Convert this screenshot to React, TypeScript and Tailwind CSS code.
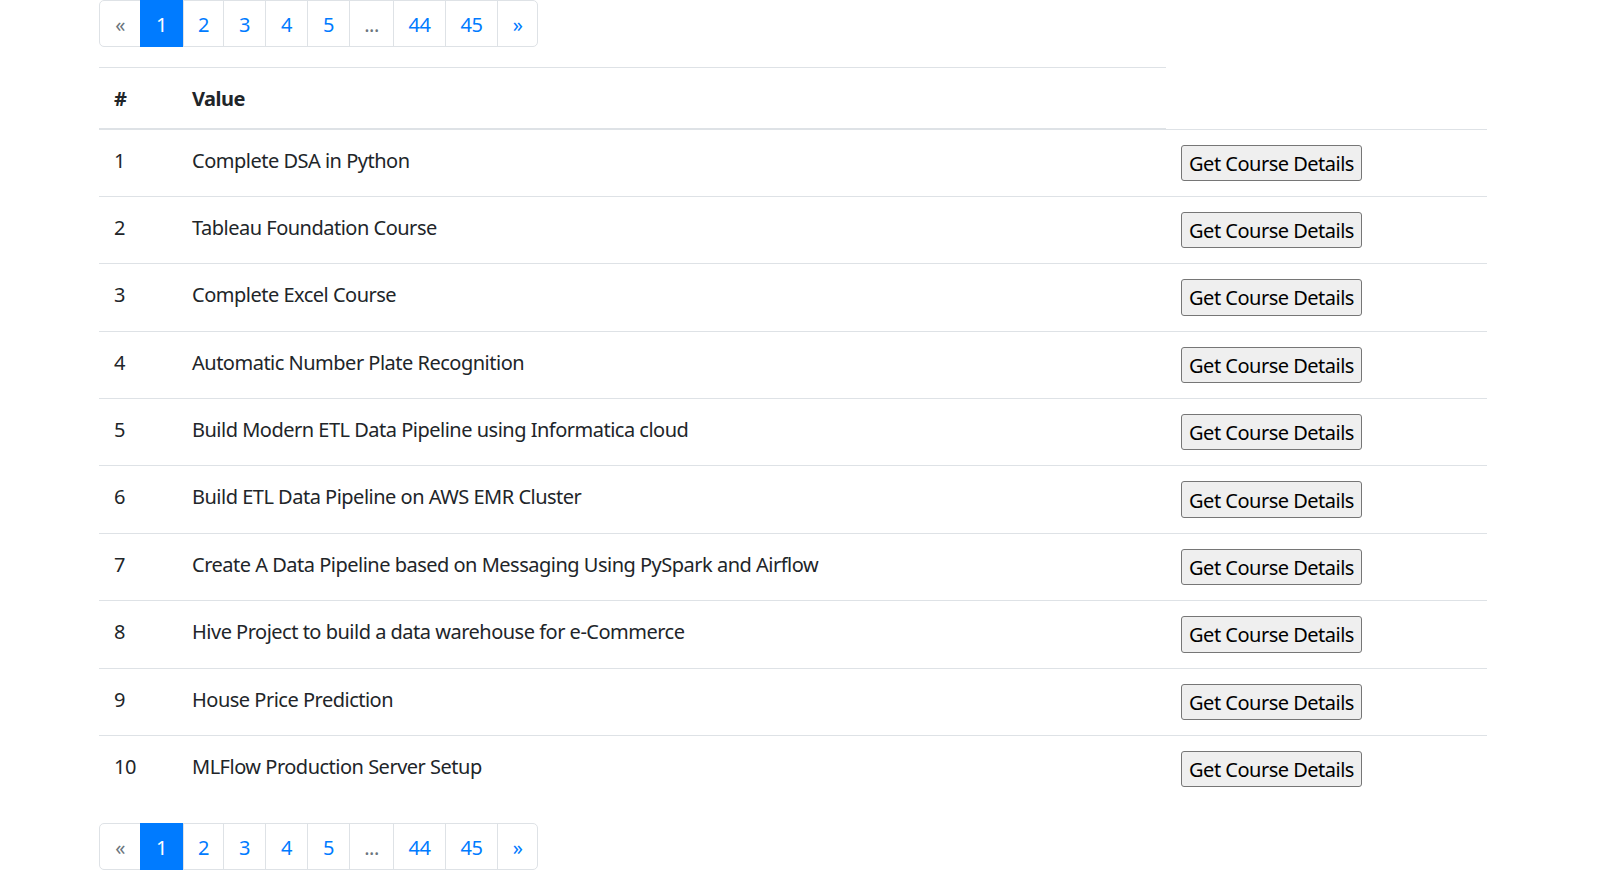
const courses = [
  "Complete DSA in Python",
  "Tableau Foundation Course",
  "Complete Excel Course",
  "Automatic Number Plate Recognition",
  "Build Modern ETL Data Pipeline using Informatica cloud",
  "Build ETL Data Pipeline on AWS EMR Cluster",
  "Create A Data Pipeline based on Messaging Using PySpark and Airflow",
  "Hive Project to build a data warehouse for e-Commerce",
  "House Price Prediction",
  "MLFlow Production Server Setup",
];

const Pager = () => (
  <nav>
    <ul className="flex h-[47px] w-fit rounded-[5px] border border-[#dee2e6] text-[20px] leading-[24px]">
      <li className="flex w-[40px] items-center justify-center pt-[2px] text-[#6c757d]">«</li>
      <li className="-my-px flex w-[43px] items-center justify-center bg-[#007bff] pt-[2px] text-white">1</li>
      <li className="flex w-[40px] items-center justify-center border-l border-[#dee2e6] pt-[2px] text-[#007bff]">2</li>
      <li className="flex w-[42px] items-center justify-center border-l border-[#dee2e6] pt-[2px] text-[#007bff]">3</li>
      <li className="flex w-[42px] items-center justify-center border-l border-[#dee2e6] pt-[2px] text-[#007bff]">4</li>
      <li className="flex w-[42px] items-center justify-center border-l border-[#dee2e6] pt-[2px] text-[#007bff]">5</li>
      <li className="flex w-[44px] items-center justify-center border-l border-[#dee2e6] pt-[2px] text-[#6c757d]">...</li>
      <li className="flex w-[52px] items-center justify-center border-l border-[#dee2e6] pt-[2px] text-[#007bff]">44</li>
      <li className="flex w-[52px] items-center justify-center border-l border-[#dee2e6] pt-[2px] text-[#007bff]">45</li>
      <li className="flex w-[40px] items-center justify-center border-l border-[#dee2e6] pt-[2px] text-[#007bff]">»</li>
    </ul>
  </nav>
);

export default function App() {
  return (
    <div
      className="min-h-screen bg-white pl-[99px] text-[20px] leading-[30px] tracking-[-0.5px] text-[#212529]"
      style={{ fontFamily: '"Segoe UI", "Noto Sans", sans-serif' }}
    >
      <Pager />
      <table className="mt-[20px] mb-[21px] w-[1388px] table-fixed border-collapse">
        <colgroup>
          <col className="w-[78px]" />
          <col className="w-[989px]" />
          <col className="w-[321px]" />
        </colgroup>
        <thead>
          <tr>
            <th className="border-t border-b-2 border-[#dee2e6] px-[15px] pt-[16px] pb-[14px] text-left font-bold">#</th>
            <th className="border-t border-b-2 border-[#dee2e6] px-[15px] pt-[16px] pb-[14px] text-left font-bold">Value</th>
          </tr>
        </thead>
        <tbody>
          {courses.map((c, i) => (
            <tr key={c}>
              <td className="border-t border-[#dee2e6] px-[15px] pt-[16px] pb-[14px] align-top">{i + 1}</td>
              <td className="border-t border-[#dee2e6] px-[15px] pt-[16px] pb-[14px] align-top">{c}</td>
              <td className="border-t border-[#dee2e6] p-[15px] align-top">
                <button className="h-[36.4px] w-[181px] rounded-[3px] border border-[#767676] bg-[#efefef] pt-[2px] text-center text-black">
                  Get Course Details
                </button>
              </td>
            </tr>
          ))}
        </tbody>
      </table>
      <Pager />
    </div>
  );
}
